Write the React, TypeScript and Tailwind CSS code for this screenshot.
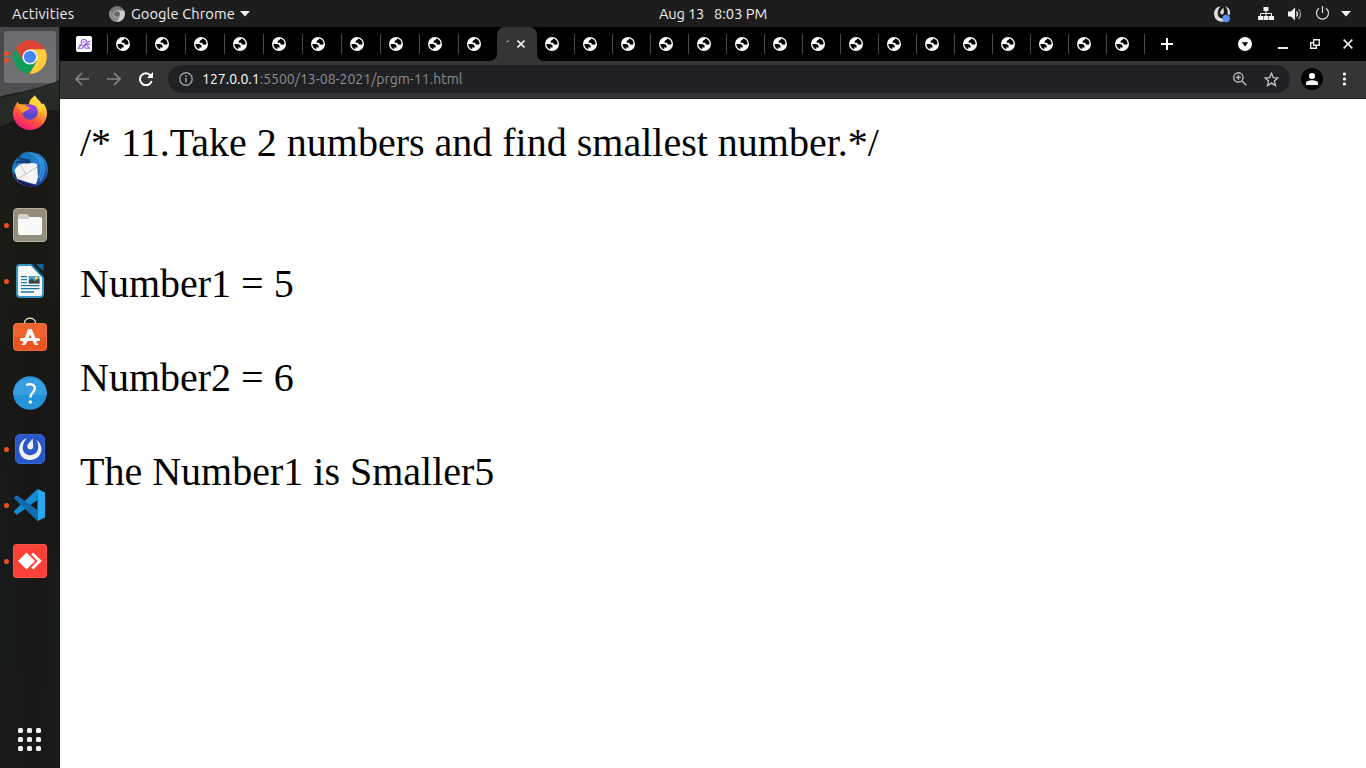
import React from "react";

const ui = "font-['Ubuntu','Noto_Sans',sans-serif]";

function Globe() {
  return (
    <svg width="14" height="14" viewBox="2 2 20 20" className="shrink-0">
      <circle cx="12" cy="12" r="10" fill="#fff" />
      <path d="M4 12h4.4c3.407.022 4.922 1.73 4.543 5.127H9.488v2.47a8.004 8.004 0 0 0 10.498-8.083C19.327 12.504 18.332 13 17 13c-2.137 0-3.206-.916-3.206-2.75h-3.748c-.274-2.728.683-4.092 2.87-4.092 0-.975.327-1.597.811-1.97A8.004 8.004 0 0 0 4 12z" fill="#fff" />
      <path d="M19.986 11.514C19.327 12.504 18.332 13 17 13c-2.137 0-3.206-.916-3.206-2.75h-3.748c-.274-2.728.683-4.092 2.87-4.092 0-.975.327-1.597.811-1.97A8 8 0 0 1 19.986 11.514ZM4 12h4.4c3.407.022 4.922 1.73 4.543 5.127H9.488v2.47A8 8 0 0 1 4 12Z" fill="#000" />
    </svg>
  );
}

function ChromeLogo({ size, mono = false }: { size: number; mono?: boolean }) {
  const c = mono ? ["#777", "#8c8c8c", "#d0d0d0", "#666", "#c4c4c4"] : ["#db4437", "#0f9d58", "#ffcd40", "#4285f4", "#f4f4f4"];
  return (
    <svg width={size} height={size} viewBox="0 0 34 34" className="shrink-0">
      <circle cx="17" cy="17" r="16.8" fill={c[0]} />
      <path d="M17 9.3H31.9A16.8 16.8 0 0 1 16.4 33.8L23.7 20.9Z" fill={c[2]} />
      <path d="M2.6 8.4A16.8 16.8 0 0 0 16.4 33.8L23.7 20.9 10.3 20.9Z" fill={c[1]} />
      <circle cx="17" cy="17" r="7.6" fill={c[4]} />
      <circle cx="17" cy="17" r="6.1" fill={c[3]} />
    </svg>
  );
}

function Firefox() {
  return (
    <svg width="36" height="36" viewBox="0 0 36 36">
      <defs>
        <linearGradient id="ff" x1=".8" y1="0" x2=".25" y2="1">
          <stop stopColor="#fff44f" /><stop offset=".35" stopColor="#ffb52e" /><stop offset=".65" stopColor="#ff4f3f" /><stop offset="1" stopColor="#ec1580" />
        </linearGradient>
        <radialGradient id="fp" cx=".6" cy=".2"><stop stopColor="#ab40f5" /><stop offset="1" stopColor="#5948c9" /></radialGradient>
      </defs>
      <path d="M23 .2C24.5 4 28 5 29.6 9L31.5 8.5C34 12 35 15 35 18.5A17 16.5 0 0 1 1 18.5C1 14 3 11 5.5 6.5L7.5 10C10 9 14 10 17 9.2 17 5 20 3 23 .2Z" fill="url(#ff)" />
      <circle cx="18" cy="17" r="7.8" fill="url(#fp)" />
      <path d="M5 9C9 8.5 11 10 14 11L18 12.8C17 15.5 13 15 12 18 10 17.5 9 15.5 7 14.5Z" fill="#ff9d25" />
      <path d="M20 10C25 9 28 13 28 17L30 14C30 8 25 5 22 4 20 6 18 8 20 10Z" fill="#ffd838" />
    </svg>
  );
}

function Thunderbird() {
  return (
    <svg width="38" height="36" viewBox="0 0 38 36">
      <defs><linearGradient id="tb" x1=".2" y1="0" x2=".8" y2="1"><stop stopColor="#1b69ad" /><stop offset=".45" stopColor="#2386d1" /><stop offset="1" stopColor="#1c3c91" /></linearGradient></defs>
      <path d="M9 5C11 1 16 .5 20 1 31 2 37 9 37 19 37 29 29 36 20 36 9 35 1 28 1 18 1 13 4 8 9 5Z" fill="url(#tb)" />
      <path d="M2 21C8 29 14 33 25 34 17 38 4 32 2 21Z" fill="#1b1552" />
      <path d="M3.5 19C7 12 17 10 26 13L27 26C26 32 25 34 23 33L6 28Z" fill="#f4f4f4" />
      <path d="M9 13 15 23 26 16M6 28 15 23" fill="none" stroke="#bfc5cc" strokeWidth="1" />
      <path d="M19 2C31 6 32 16 28 27M25 4C35 11 34 21 29 30" fill="none" stroke="#3794dd" strokeWidth="1.6" />
      <path d="M7 7C11 8 13 10 19 9M5 12C9 8 14 13 20 11" fill="none" stroke="#123b6f" strokeWidth="2" />
    </svg>
  );
}

function Files() {
  return (
    <svg width="34" height="34" viewBox="0 0 34 34">
      <rect x=".5" y=".5" width="33" height="33" rx="3.5" fill="#938d7e" stroke="#b5afa1" />
      <path d="M5 8Q5 6 7 6H14L17 9H28V24H5Z" fill="#d7d2c7" />
      <path d="M5 11H15L17 9H27Q29 9 29 11V25Q29 27 27 27H7Q5 27 5 25Z" fill="#fafafa" />
    </svg>
  );
}

function Writer() {
  return (
    <svg width="28" height="34" viewBox="0 0 28 34">
      <path d="M4 1H15.5L27 13V30Q27 33 24 33H4Q1 33 1 30V4Q1 1 4 1Z" fill="#fafafa" stroke="#3795c5" strokeWidth="2" />
      <path d="M20 0H27.5V7.5Z" fill="#10669d" /><path d="M16 0 28 13" stroke="#104866" strokeWidth="1.6" />
      <path d="M5 12.7H11M5 15.7H11M5 18.7H11M5 21.7H23.5M5 24.7H23.5M5 28H18" stroke="#1875a8" strokeWidth="1.3" />
      <rect x="12.5" y="12" width="11" height="7.5" fill="#5b9fc9" />
      <path d="M13 19.5V16.5L16 14.5 19 17.5 21.5 13.5 23.5 15.5V19.5Z" fill="#3d4140" /><circle cx="20.5" cy="14" r="1.5" fill="#ffe03b" />
    </svg>
  );
}

function Software() {
  return (
    <svg width="34" height="34" viewBox="0 0 34 34" className="mb-[6px]">
      <path d="M11.5 8V6C11.5 -.2 22.5 -.2 22.5 6V8" fill="none" stroke="#e8d3b0" strokeWidth="1.5" />
      <rect x=".5" y="6.5" width="33" height="27" rx="3" fill="#e95420" stroke="#ef7240" />
      <path d="M1 7H33V20H1Z" fill="#f26c38" opacity=".65" />
      <path d="M17 12.5 11.5 26M17 12.5 22.5 26" fill="none" stroke="#fff" strokeWidth="3.6" />
      <path d="M8.5 22.5H25.5" stroke="#fff" strokeWidth="3.2" strokeLinecap="round" /><path d="M9.5 26.2H13L12 28H8.5ZM21 26.2H24.5L25.5 28H22Z" fill="#fff" />
    </svg>
  );
}

function Help() {
  return (
    <svg width="34" height="34" viewBox="0 0 34 34">
      <circle cx="17" cy="17" r="16.8" fill="#2492d9" /><path d="M.2 19A16.8 16.8 0 1 1 33.8 19Z" fill="#379fdf" />
      <path d="M13.2 9.2C16 7.5 21.8 7.8 21.8 12.2 21.8 16.5 17.4 16.5 17.4 21.5" fill="none" stroke="#fff" strokeWidth="2.4" />
      <circle cx="17.4" cy="26" r="1.8" fill="#fff" />
    </svg>
  );
}

function Mattermost() {
  return (
    <svg width="30" height="30" viewBox="0 0 30 30">
      <rect x=".5" y=".5" width="29" height="29" rx="4.5" fill="#2857c8" stroke="#396ad4" />
      <path d="M12 4.2C.8 7.5 1.4 25.5 15 26 27.5 25.5 30 11.5 21.2 5.8 24.8 11 24.2 20.8 15.5 21.2 7.2 21.2 5 11.5 12 4.2Z" fill="#f2f2f4" />
      <path d="M17.6 4.2C16 7.5 12.3 9.2 12.3 12.8 12.6 16.4 18.2 16.4 18.3 12.4Z" fill="#f2f2f4" />
    </svg>
  );
}

function Code() {
  return (
    <svg width="34" height="34" viewBox="0 0 34 34">
      <path d="M24.5 1V12L5 26Q4 27 3 26L1.3 24.4Q.4 23.4 1.5 22.5Z" fill="#168bd0" />
      <path d="M1.5 11Q.5 10 1.5 9L3 7.8Q4 7 5 8L24.5 22V33Z" fill="#116bae" />
      <path d="M24.5 1 32 4.5V29.5L24.5 33Z" fill="#28a8f0" />
    </svg>
  );
}

function AnyDesk() {
  return (
    <svg width="34" height="34" viewBox="0 0 34 34">
      <rect x=".5" y=".5" width="33" height="33" rx="2.5" fill="#fb4036" stroke="#ff554b" />
      <path d="M13.5 8.5 22 17 13.5 25.5 5 17Z" fill="#fff" /><path d="M18.2 10.6 20.3 8.5 28.8 17 20.3 25.5 18.2 23.4 24.6 17Z" fill="#fff" />
    </svg>
  );
}

const apps = [
  { icon: <ChromeLogo size={34} />, dots: 2 },
  { icon: <Firefox />, dots: 0 },
  { icon: <Thunderbird />, dots: 0 },
  { icon: <Files />, dots: 1 },
  { icon: <Writer />, dots: 1 },
  { icon: <Software />, dots: 0 },
  { icon: <Help />, dots: 0 },
  { icon: <Mattermost />, dots: 1 },
  { icon: <Code />, dots: 1 },
  { icon: <AnyDesk />, dots: 1 },
];

function TopBar() {
  return (
    <header className={`flex h-[27px] shrink-0 items-center bg-[#1d1d1d] text-[14.667px] text-[#f0f0f0] ${ui}`}>
      <span className="ml-3 w-[97px] tracking-[0.22px]">Activities</span>
      <ChromeLogo size={16} mono />
      <span className="ml-1.5 w-[106px] whitespace-nowrap tracking-[0.08px]">Google Chrome</span>
      <svg className="ml-[3px]" width="10" height="6" viewBox="0 0 10 6"><path d="M0 0H10L5 5.5Z" fill="#f2f2f2" /></svg>
      <span className="ml-[409px] w-[46px] whitespace-nowrap tracking-[-0.2px]">Aug 13</span>
      <span className="ml-[9px] w-[53px] whitespace-nowrap">8:03 PM</span>
      <div className="ml-auto flex items-center pr-[15px]">
        <svg width="18" height="18" viewBox="0 0 18 18">
          <path d="M7.5 1.3C-2 3 -.5 16.5 9 16.8L11 16.5 9.3 13.5C3.5 13 3.5 6 7.5 1.3Z" fill="#ddd" />
          <path d="M10.5 2.5C9.5 4.5 7.2 5.5 7.2 7.8 7.8 10.2 11 9.8 10.9 7ZM12.3 1.2C17 3 18 7 16.5 10.2L14.6 9.3C15 6 14.5 4 12.3 1.2Z" fill="#ddd" />
          <circle cx="13.2" cy="13.5" r="3.7" fill="#5294f3" />
        </svg>
        <svg className="ml-[27px]" width="16" height="14" viewBox="0 0 16 14"><path d="M5.5 0H10.5V4H5.5ZM0 9H5V13H0ZM5.5 9H10.5V13H5.5ZM11 9H16V13H11Z" fill="#f2f2f2" /><path d="M8 4V9M2.5 9V6.5H13.5V9" fill="none" stroke="#f2f2f2" /></svg>
        <svg className="ml-[14px]" width="16" height="14" viewBox="0 0 16 14"><path d="M0 4.5H3L7 .5V13.5L3 9.5H0Z" fill="#f2f2f2" /><path d="M8.5 4.5Q10.5 7 8.5 9.5" fill="none" stroke="#eee" strokeWidth="1.3" /><path d="M10.5 2Q14.5 7 10.5 12" fill="none" stroke="#aaa" strokeWidth="1.2" /></svg>
        <svg className="ml-[11px]" width="15" height="15" viewBox="0 0 15 15"><path d="M4 2.2A6 6 0 1 0 11 2.2M7.5 0V7" fill="none" stroke="#ddd" strokeWidth="1.2" /></svg>
        <svg className="ml-[11px]" width="10" height="6" viewBox="0 0 10 6"><path d="M0 0H10L5 5.5Z" fill="#f2f2f2" /></svg>
      </div>
    </header>
  );
}

function Dock() {
  return (
    <aside className="relative flex w-[60px] shrink-0 flex-col overflow-hidden bg-[#191a19] pt-[2px]">
      <svg className="absolute inset-0" width="60" height="741" viewBox="0 0 60 741">
        <defs>
          <linearGradient id="sky" x1="0" x2="0" y1="0" y2="1"><stop stopColor="#45474b" /><stop offset="1" stopColor="#4f5052" /></linearGradient>
          <linearGradient id="hill" x1="0" x2="0" y1="0" y2="1"><stop stopColor="#262a24" /><stop offset=".12" stopColor="#191a18" /><stop offset=".27" stopColor="#1b1c14" /><stop offset=".5" stopColor="#181816" /><stop offset=".8" stopColor="#181b1c" /><stop offset="1" stopColor="#1b1b1a" /></linearGradient>
          <linearGradient id="trunk"><stop stopColor="#161514" stopOpacity="0" /><stop offset=".5" stopColor="#161514" stopOpacity=".7" /><stop offset="1" stopColor="#161514" stopOpacity="0" /></linearGradient>
        </defs>
        <rect width="60" height="741" fill="url(#hill)" />
        <path d="M0 0H60V53Q40 61 20 65T0 70Z" fill="url(#sky)" />
        <path d="M0 71Q30 66 60 54V82Q30 84 0 100Z" fill="#272b25" />
        <path d="M10 150H54V741H10Z" fill="url(#trunk)" />
        <path d="M59.5 0V741" stroke="#151515" />
      </svg>
      {apps.map((app, i) => (
        <div key={i} className="relative flex h-14 w-[60px] shrink-0 items-center justify-center">
          {i === 0 && <div className="absolute left-1 top-[2px] h-[52px] w-[52px] rounded-[3px] bg-white/20" />}
          <div className="absolute left-[4px] flex flex-col gap-[2px]">
            {Array.from({ length: app.dots }, (_, d) => <i key={d} className="size-[5px] rounded-full bg-[#e95420]" />)}
          </div>
          <div className="relative">{app.icon}</div>
        </div>
      ))}
      <div className="relative mb-[17px] ml-[18px] mt-auto grid w-[23px] grid-cols-3 gap-1">
        {Array.from({ length: 9 }, (_, i) => <i key={i} className="size-[5px] rounded-[1.5px] bg-[#f4f4f4]" />)}
      </div>
    </aside>
  );
}

function Separator() {
  return <i className="ml-auto h-5 w-px bg-[#4b4b4b]" />;
}

function Tabs() {
  return (
    <div className="flex h-[34px] shrink-0 items-center bg-black">
      <div className="flex h-full w-12 items-center pl-4">
        <svg width="16" height="16" viewBox="0 0 16 16"><rect width="16" height="16" rx="2" fill="#fff" /><g fill="none" stroke="#9554e8" strokeWidth="1.1"><path d="M6 8A2.7 2.7 0 1 1 9.6 8L8 9.5M5.8 7.5 2.3 12.3H6.2L8 10.2 9.8 12.3H13.4L11 9.2M3 9.2Q4.5 8.6 6.3 9.6T9.8 9Q12 7 14 8.5M10.5 6.5 14.5 5" /></g><circle cx="7.7" cy="5.9" r=".9" fill="#9554e8" /></svg>
        <Separator />
      </div>
      {Array.from({ length: 10 }, (_, i) => (
        <div key={i} className="flex w-[39px] items-center pl-2"><Globe />{i < 9 && <Separator />}</div>
      ))}
      <div className="relative -ml-px flex h-full w-10 items-center rounded-t-[8px] bg-[#353535]">
        <svg className="absolute -left-2 bottom-0" width="56" height="8" viewBox="0 0 56 8"><path d="M0 8Q8 8 8 0V8ZM56 8Q48 8 48 0V8Z" fill="#353535" /></svg>
        <svg className="ml-[9px]" width="4" height="8" viewBox="0 0 4 8"><path d="M.3 2 3 .8" stroke="#bbb" /></svg>
        <svg className="ml-[7px]" width="8" height="8" viewBox="0 0 8 8"><path d="M.5 .5 7.5 7.5M7.5 .5 .5 7.5" stroke="#f1f1f1" strokeWidth="1.6" /></svg>
      </div>
      <div className="flex items-center">
        {Array.from({ length: 16 }, (_, i) => (
          <div key={i} className="flex w-[38px] items-center pl-2"><Globe /><Separator /></div>
        ))}
      </div>
      <svg className="ml-4" width="12" height="12" viewBox="0 0 12 12"><path d="M6 0V12M0 6H12" stroke="#fff" strokeWidth="2" /></svg>
      <div className="ml-auto flex items-center pr-[13px]">
        <svg width="14" height="14" viewBox="0 0 14 14"><circle cx="7" cy="7" r="7" fill="#fff" /><path d="M3.8 5.2H10.2L7 9.5Z" fill="#000" /></svg>
        <svg className="ml-[26px]" width="10" height="10" viewBox="0 0 10 10"><path d="M0 9H10" stroke="#e8e8e8" strokeWidth="2" /></svg>
        <svg className="ml-[22px]" width="10" height="10" viewBox="0 0 10 10"><path d="M3.7.7H9.3V6.3H3.7ZM3 3.7H.7V9.3H6.3V7" fill="none" stroke="#e8e8e8" strokeWidth="1.4" /></svg>
        <svg className="ml-[23px]" width="10" height="10" viewBox="0 0 10 10"><path d="M.7.7 9.3 9.3M9.3.7.7 9.3" stroke="#e8e8e8" strokeWidth="1.7" /></svg>
      </div>
    </div>
  );
}

function Toolbar() {
  return (
    <div className="flex h-[38px] shrink-0 items-center border-b border-[#242424] bg-[#353535] pb-px">
      <svg className="ml-[15px]" width="14" height="14" viewBox="0 0 14 14"><path d="M14 7H1.2M7 1 1 7 7 13" fill="none" stroke="#848484" strokeWidth="1.7" /></svg>
      <svg className="ml-[18px]" width="14" height="14" viewBox="0 0 14 14"><path d="M0 7H12.8M7 1 13 7 7 13" fill="none" stroke="#848484" strokeWidth="1.7" /></svg>
      <svg className="ml-[18px]" width="14" height="14" viewBox="0 0 14 14"><path d="M11.6 3.4A6 6 0 1 0 12.7 9" fill="none" stroke="#fff" strokeWidth="2" /><path d="M14 0V6H8Z" fill="#fff" /></svg>
      <div className={`ml-[15px] flex h-7 w-[1122px] items-center rounded-full bg-[#202124] pl-[11px] pr-[10px] text-[14px] text-[#8b8d8f] ${ui}`}>
        <svg width="14" height="14" viewBox="0 0 14 14"><circle cx="7" cy="7" r="6.2" fill="none" stroke="#9aa0a6" strokeWidth="1.4" /><path d="M7 6V10.5M7 3.3V4.9" stroke="#9aa0a6" strokeWidth="1.5" /></svg>
        <span className="ml-[9px] whitespace-nowrap"><b className="font-normal text-white">127.0.0.1</b>:5500/13-08-2021/prgm-11.html</span>
        <svg className="ml-auto" width="14" height="14" viewBox="0 0 14 14"><path d="M9 9 13.3 13.3M5.4 3V7.8M3 5.4H7.8" stroke="#bdbdbd" strokeWidth="1.4" /><circle cx="5.4" cy="5.4" r="4.6" fill="none" stroke="#bdbdbd" strokeWidth="1.4" /></svg>
        <svg className="ml-[17px] mr-px" width="15" height="15" viewBox="0 0 15 15"><path d="M7.5 1.3 9.3 5.6 14 6 10.4 9 11.5 13.6 7.5 11.1 3.5 13.6 4.6 9 1 6 5.7 5.6Z" fill="none" stroke="#c4c4c4" strokeWidth="1.3" /></svg>
      </div>
      <svg className="ml-[11px]" width="22" height="22" viewBox="0 0 22 22"><circle cx="11" cy="11" r="11" fill="#000" /><circle cx="11" cy="8" r="3" fill="#fff" /><path d="M5 17V15C5 11.3 17 11.3 17 15V17Z" fill="#fff" /></svg>
      <svg className="ml-[20px]" width="4" height="14" viewBox="0 0 4 14"><circle cx="1.5" cy="2" r="1.6" fill="#fff" /><circle cx="1.5" cy="7" r="1.6" fill="#fff" /><circle cx="1.5" cy="12" r="1.6" fill="#fff" /></svg>
    </div>
  );
}

export default function App() {
  return (
    <div className="flex h-[768px] w-[1366px] flex-col overflow-hidden">
      <TopBar />
      <div className="flex min-h-0 flex-1">
        <Dock />
        <div className="flex min-w-0 flex-1 flex-col">
          <Tabs />
          <Toolbar />
          <main className="flex-1 whitespace-pre-line bg-white p-5 font-['Liberation_Serif',serif] text-[40px] leading-[47px] text-black">
            {"/* 11.Take 2 numbers and find smallest number.*/\n\n\nNumber1 = 5\n\nNumber2 = 6\n\nThe Number1 is Smaller5"}
          </main>
        </div>
      </div>
    </div>
  );
}
